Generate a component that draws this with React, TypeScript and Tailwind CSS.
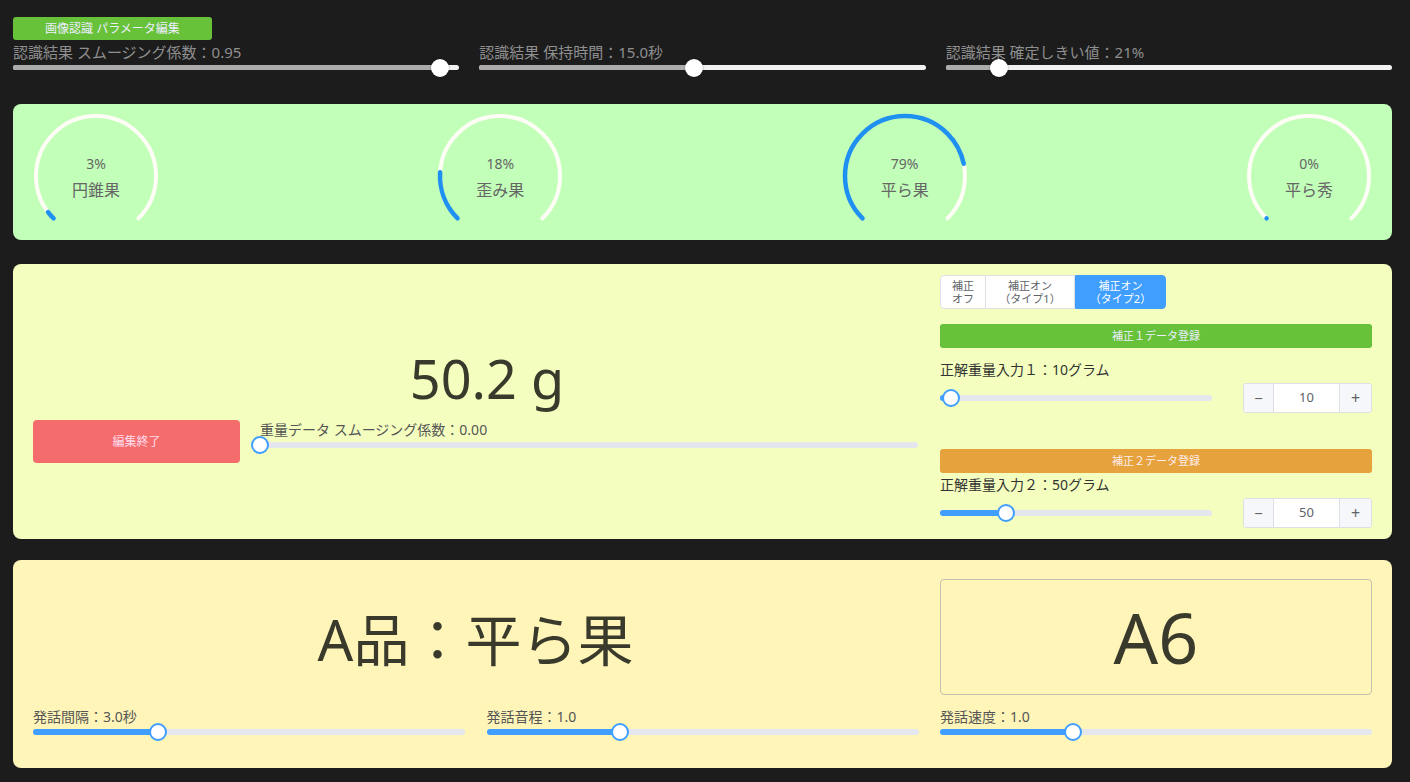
import React from 'react';

const FONT = "font-['Noto_Sans','Noto_Sans_CJK_JP',sans-serif]";

// dark-theme slider used in the parameter header
function DarkSlider({ label, pct }: { label: string; pct: number }) {
  return (
    <div>
      <div className="text-[15px] leading-[16px] text-[#8f8f8f] whitespace-nowrap">{label}</div>
      <div className="relative mt-[5px] h-[5px] rounded-full bg-[#f2f2f2]">
        <div className="h-full rounded-full bg-[#ababab]" style={{ width: `${pct}%` }} />
        <div
          className="absolute top-1/2 h-[18px] w-[18px] -translate-x-1/2 -translate-y-1/2 rounded-full bg-white shadow-[0_0_2px_rgba(0,0,0,0.4)]"
          style={{ left: `${pct}%` }}
        />
      </div>
    </div>
  );
}

function ElSlider({ pct }: { pct: number }) {
  return (
    <div className="relative h-[6px] rounded-full bg-[#e4e7ed]">
      <div className="h-full rounded-full bg-[#409eff]" style={{ width: `${pct}%` }} />
      <div
        className="absolute top-1/2 h-[18px] w-[18px] -translate-x-1/2 -translate-y-1/2 rounded-full border-2 border-[#409eff] bg-white"
        style={{ left: `${pct}%` }}
      />
    </div>
  );
}

function LabeledSlider({ label, pct }: { label: string; pct: number }) {
  return (
    <div>
      <div className="text-[14px] leading-[20px] text-[#555]">{label}</div>
      <div className="mt-[2px]">
        <ElSlider pct={pct} />
      </div>
    </div>
  );
}

function Gauge({ value, label }: { value: number; label: string }) {
  return (
    <div className="relative h-[126px] w-[126px]">
      <svg width="126" height="126" viewBox="0 0 126 126">
        <g transform="rotate(135 63 63)">
          <circle
            cx="63"
            cy="63"
            r="60"
            fill="none"
            stroke="#fffdf5"
            strokeWidth="4"
            pathLength={360}
            strokeDasharray="270 360"
            strokeLinecap="round"
          />
          <circle
            cx="63"
            cy="63"
            r="60"
            fill="none"
            stroke="#1e90f0"
            strokeWidth="4.5"
            pathLength={360}
            strokeDasharray={`${(270 * value) / 100} 360`}
            strokeLinecap="round"
          />
        </g>
      </svg>
      <div className="absolute inset-0 flex flex-col items-center justify-center pt-[1px] text-[#666]">
        <div className="text-[14px] leading-[20px]">{value}%</div>
        <div className="mt-[6px] text-[16px] leading-[20px]">{label}</div>
      </div>
    </div>
  );
}

function NumberInput({ value }: { value: number }) {
  return (
    <div className="flex h-[30px] w-[129px] overflow-hidden rounded-[3px] border border-[#dcdfe6] bg-white text-[#606266]">
      <div className="flex w-[30px] items-center justify-center border-r border-[#dcdfe6] bg-[#f5f7fa] text-[15px]">−</div>
      <div className="flex flex-1 items-center justify-center text-[13px]">{value}</div>
      <div className="flex w-[32px] items-center justify-center border-l border-[#dcdfe6] bg-[#f5f7fa] text-[16px]">+</div>
    </div>
  );
}

function SegButton({ lines, active, className }: { lines: string[]; active?: boolean; className: string }) {
  return (
    <button
      className={`flex flex-col items-center justify-center ${className} ${
        active ? 'border border-[#409eff] bg-[#409eff] text-white' : 'bg-white text-[#606266]'
      }`}
    >
      {lines.map((l) => (
        <span key={l} className="block text-[11px] leading-[13px]">
          {l}
        </span>
      ))}
    </button>
  );
}

const gauges = [
  { value: 3, label: '円錐果' },
  { value: 18, label: '歪み果' },
  { value: 79, label: '平ら果' },
  { value: 0, label: '平ら秀' },
];

export default function App() {
  return (
    <div className={`min-h-screen bg-[#1c1c1c] pl-[13px] pr-[18px] pt-[17px] ${FONT}`}>
      {/* Parameter header */}
      <button className="flex h-[23px] w-[199px] items-center justify-center rounded-[3px] bg-[#67c23a] text-[12px] text-[#eef]">
        画像認識 パラメータ編集
      </button>
      <div className="mt-[4px] grid grid-cols-3 gap-5">
        <DarkSlider label="認識結果 スムージング係数：0.95" pct={95.7} />
        <DarkSlider label="認識結果 保持時間：15.0秒" pct={48} />
        <DarkSlider label="認識結果 確定しきい値：21%" pct={12} />
      </div>

      {/* Gauges */}
      <div className="mt-[34px] flex h-[136px] justify-between rounded-[8px] bg-[#c2ffb9] px-5 pt-[9px]">
        {gauges.map((g) => (
          <Gauge key={g.label} value={g.value} label={g.label} />
        ))}
      </div>

      {/* Weight panel */}
      <div className="mt-[24px] grid h-[275px] grid-cols-[1fr_432px] gap-[22px] rounded-[8px] bg-[#f4ffbf] px-5 py-[11px]">
        <div className="flex flex-col justify-center pt-[11px]">
          <div className="pl-[23px] text-center text-[54px] leading-[54px] text-[#3a3a2c]">50.2 g</div>
          <div className="mt-[15px] flex">
            <button className="h-[43px] w-[207px] rounded-[4px] bg-[#f56c6c] text-[12px] text-[#fde]">編集終了</button>
            <div className="ml-5 flex-1">
              <LabeledSlider label="重量データ スムージング係数：0.00" pct={0} />
            </div>
          </div>
        </div>

        <div>
          <div className="flex h-[34px]">
            <SegButton lines={['補正', 'オフ']} className="w-[46px] rounded-l-[4px] border border-[#dcdfe6]" />
            <SegButton lines={['補正オン', '（タイプ1）']} className="w-[89px] border-y border-r border-[#dcdfe6]" />
            <SegButton lines={['補正オン', '（タイプ2）']} active className="w-[91px] rounded-r-[4px]" />
          </div>

          <div className="mt-[15px] flex h-[24px] items-center justify-center rounded-[3px] bg-[#67c23a] text-[11px] text-[#eef]">
            補正１データ登録
          </div>
          <div className="mt-[12px] text-[14px] leading-[20px] text-[#333]">正解重量入力１：10グラム</div>
          <div className="mt-[3px] flex items-center justify-between">
            <div className="w-[272px]">
              <ElSlider pct={4} />
            </div>
            <NumberInput value={10} />
          </div>

          <div className="mt-[36px] flex h-[24px] items-center justify-center rounded-[3px] bg-[#e6a23c] text-[11px] text-[#fee]">
            補正２データ登録
          </div>
          <div className="mt-[2px] text-[14px] leading-[20px] text-[#333]">正解重量入力２：50グラム</div>
          <div className="mt-[3px] flex items-center justify-between">
            <div className="w-[272px]">
              <ElSlider pct={24.3} />
            </div>
            <NumberInput value={50} />
          </div>
        </div>
      </div>

      {/* Speech panel */}
      <div className="mt-[21px] h-[208px] rounded-[8px] bg-[#fff5b8] px-5 pt-[19px]">
        <div className="grid grid-cols-[1fr_432px] gap-[22px]">
          <div className="mt-[3px] flex items-center justify-center text-[56px] leading-[60px] text-[#3a3a2c]">
            A品：平ら果
          </div>
          <div className="flex h-[116px] items-center justify-center rounded-[4px] border border-[#c0c0b0] text-[70px] leading-none text-[#3a3a2c]">
            A6
          </div>
        </div>
        <div className="mt-[12px] grid grid-cols-3 gap-[21.5px]">
          <LabeledSlider label="発話間隔：3.0秒" pct={29} />
          <LabeledSlider label="発話音程：1.0" pct={31} />
          <LabeledSlider label="発話速度：1.0" pct={30.8} />
        </div>
      </div>
    </div>
  );
}
